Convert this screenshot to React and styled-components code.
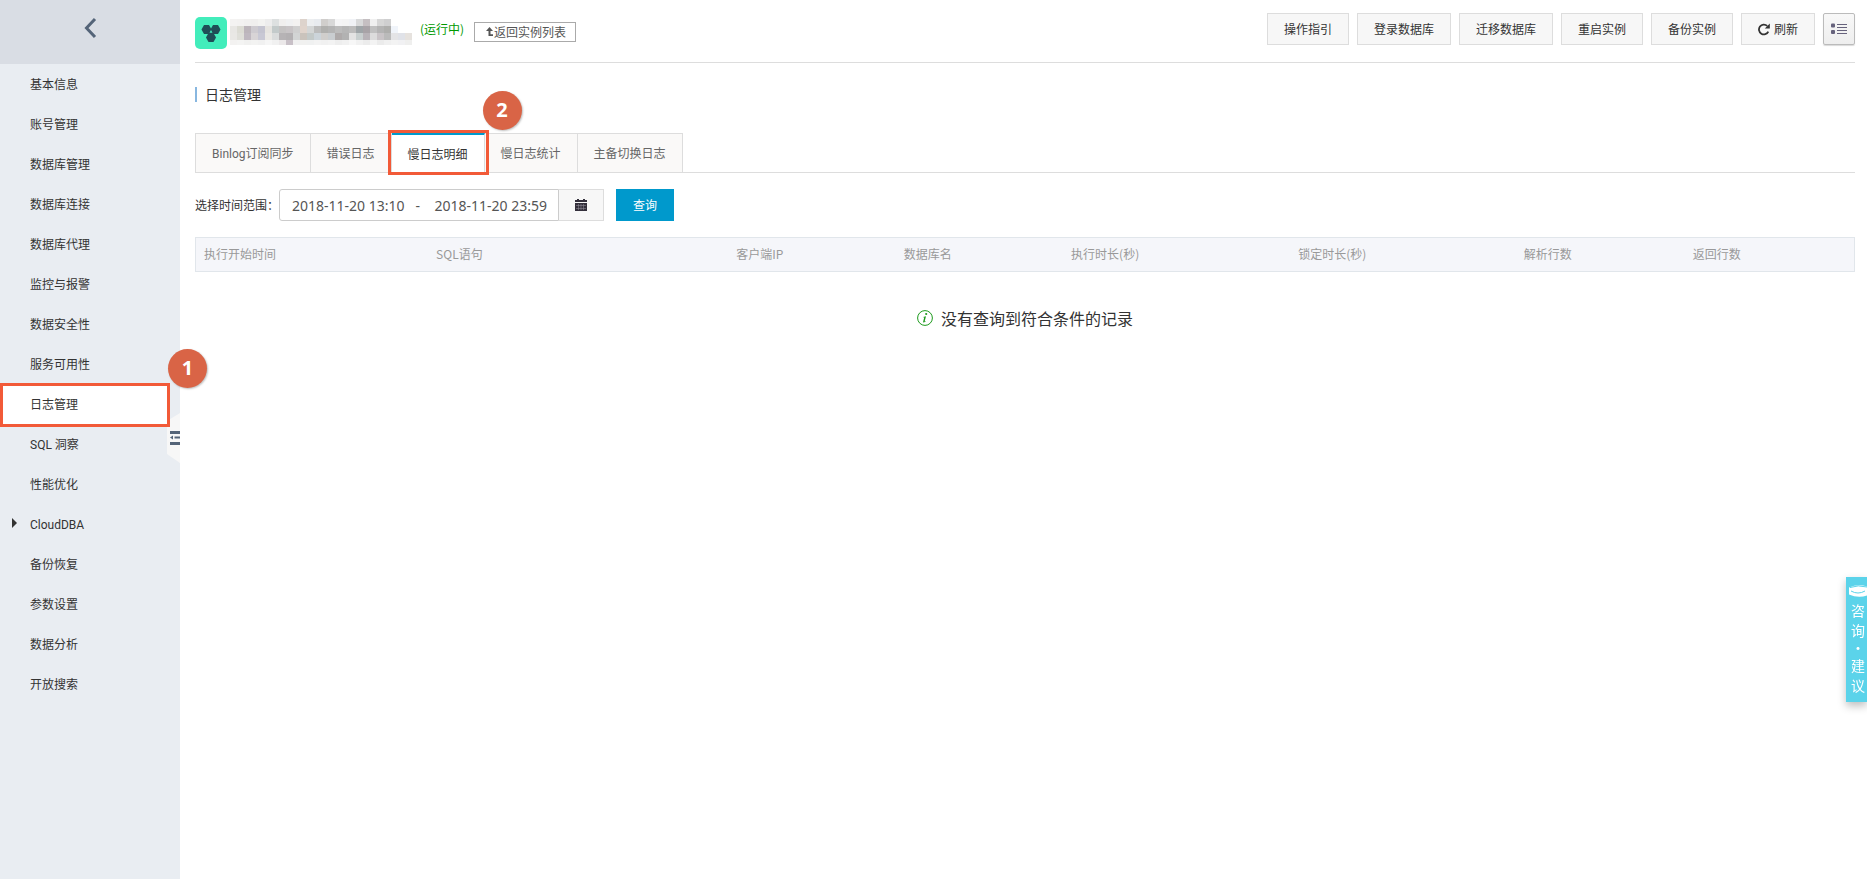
import React from 'react';
import styled, { createGlobalStyle } from 'styled-components';

const Color = {
	text: '#333',
	muted: '#999',
	line: '#ddd',
	side: '#e9edf2',
	sideTop: '#d9dde4',
	primary: '#0099cc',
	mark: '#f25a38',
	badge: '#d96446',
	help: '#5bd3ea',
};

const GlobalStyle = createGlobalStyle`
	* {
		box-sizing: border-box;
	}
	body {
		margin: 0;
		background: #fff;
		color: ${Color.text};
		font: 12px/20px "Noto Sans CJK SC", sans-serif;
	}
	button, input {
		font: inherit;
		color: inherit;
		margin: 0;
	}
	svg {
		display: block;
		flex: none;
	}
`;

const Layout = styled.div`
	display: flex;
	min-height: 100vh;
`;

const Sidebar = styled.aside`
	position: relative;
	flex: 0 0 180px;
	background: ${Color.side};
`;

const BackButton = styled.button`
	display: flex;
	align-items: center;
	justify-content: center;
	width: 100%;
	height: 64px;
	padding: 0 0 8px;
	border: 0;
	background: ${Color.sideTop};
`;

const Menu = styled.ul`
	list-style: none;
	margin: 0;
	padding: 0;
`;

const MenuItem = styled.li`
	position: relative;
	margin-right: 10px;
`;

const MenuLink = styled.a`
	display: flex;
	align-items: center;
	height: 40px;
	padding: 2px 0 0 30px;
	color: ${Color.text};
	font-family: Roboto, "Noto Sans CJK SC", sans-serif;
	text-decoration: none;
	background: ${props => props.$active ? '#fff' : 'transparent'};
`;

const Caret = styled.span`
	position: absolute;
	left: 12px;
	top: 14px;
	border: 5px solid transparent;
	border-left-color: ${Color.text};
	border-right: 0;
`;

const Frame = styled.span`
	position: absolute;
	inset: ${props => props.$inset};
	border: 3px solid ${Color.mark};
	pointer-events: none;
	z-index: 2;
`;

const Badge = styled.span`
	position: absolute;
	top: ${props => props.$top};
	right: -37px;
	width: 39px;
	height: 39px;
	border-radius: 50%;
	background: ${Color.badge};
	box-shadow: 1px 1px 2px rgba(0, 0, 0, .25);
	color: #fff;
	font: bold 20px/38px "Noto Sans", sans-serif;
	text-align: center;
	z-index: 3;
`;

const Handle = styled.button`
	position: absolute;
	right: 0;
	top: 413px;
	width: 13px;
	height: 50px;
	padding: 0;
	border: 0;
	background: none;
`;

const Main = styled.main`
	flex: 1 1 auto;
	min-width: 0;
	padding: 0 12px 0 15px;
`;

const Header = styled.header`
	display: flex;
	justify-content: space-between;
	height: 63px;
	border-bottom: 1px solid ${Color.line};
`;

const Instance = styled.div`
	display: flex;
	align-items: flex-start;
	padding-top: 17px;
`;

const MaskedName = styled.svg`
	margin: 2px 8px 0 3px;
`;

const Status = styled.span`
	width: 46px;
	margin: 2px 8px 0 0;
	color: #090;
	white-space: nowrap;
`;

const ListButton = styled.button`
	display: flex;
	align-items: center;
	height: 20px;
	margin-top: 5px;
	padding: 0 9px 0 11px;
	border: 1px solid #aaa;
	background: #fff;
	color: #555;
	line-height: 18px;
`;

const Toolbar = styled.div`
	display: flex;
	gap: 8px;
	padding-top: 13px;
`;

const ToolButton = styled.button`
	display: flex;
	align-items: center;
	gap: 4px;
	height: 32px;
	padding: 0 16px;
	border: 1px solid ${Color.line};
	background: #f7f7f7;
	white-space: nowrap;
`;

const ViewButton = styled(ToolButton)`
	width: 32px;
	justify-content: center;
	padding: 0;
	border-color: #bbb;
	border-radius: 2px;
	background: linear-gradient(#f8f8f8, #eee);
	box-shadow: 0 1px 1px rgba(0, 0, 0, .15);
`;

const Title = styled.h1`
	display: flex;
	align-items: center;
	gap: 8px;
	margin: 20px 0 0;
	font-size: 14px;
	line-height: 22px;
	font-weight: 400;

	&::before {
		content: '';
		width: 2px;
		height: 15px;
		background: #88b7e0;
	}
`;

const Tabs = styled.div`
	display: flex;
	margin-top: 28px;
	border-bottom: 1px solid ${Color.line};
`;

const TabCell = styled.div`
	position: relative;
`;

const Tab = styled.button`
	display: block;
	height: 39px;
	padding: 2px 16px 0;
	border: 1px solid ${Color.line};
	border-width: 1px 1px 0 0;
	background: #faf9f8;
	color: #666;
	font-family: Roboto, "Noto Sans CJK SC", sans-serif;

	${TabCell}:first-child & {
		border-left-width: 1px;
	}

	&[aria-selected='true'] {
		height: 40px;
		margin-bottom: -1px;
		border-top: 2px solid ${Color.primary};
		background: #fff;
		color: ${Color.text};
	}
`;

const Filter = styled.form`
	display: flex;
	align-items: center;
	margin: 16px 0;
`;

const RangeLabel = styled.label`
	width: 84px;
	white-space: nowrap;
`;

const RangeInput = styled.input`
	width: 280px;
	height: 32px;
	padding: 0 0 0 12px;
	border: 1px solid #ccc;
	border-radius: 3px 0 0 3px;
	color: #555;
	font: 14px "Noto Sans", sans-serif;
	outline: 0;
`;

const CalendarButton = styled.button`
	display: flex;
	align-items: center;
	justify-content: center;
	width: 45px;
	height: 32px;
	padding: 0;
	border: 1px solid ${Color.line};
	border-left: 0;
	background: #f7f7f7;
`;

const SearchButton = styled.button`
	height: 32px;
	margin-left: 12px;
	padding: 0 17px;
	border: 0;
	background: ${Color.primary};
	color: #fff;
`;

const Table = styled.table`
	width: 100%;
	table-layout: fixed;
	border-spacing: 0;
	border: 1px solid #e1e6eb;
	background: #f5f6fa;
`;

const Th = styled.th`
	width: ${props => props.$width};
	height: 33px;
	padding: 0 8px 2px;
	color: ${Color.muted};
	font-weight: 400;
	text-align: left;
	white-space: nowrap;
`;

const Empty = styled.p`
	display: flex;
	align-items: center;
	justify-content: center;
	gap: 8px;
	margin: 33px 0 0;
	font-size: 16px;
	line-height: 26px;
`;

const Help = styled.button`
	position: fixed;
	right: 0;
	top: 577px;
	display: flex;
	flex-direction: column;
	align-items: center;
	width: 21px;
	height: 125px;
	padding: 0 0 4px 3px;
	border: 0;
	background: ${Color.help};
	box-shadow: 0 4px 8px rgba(0, 0, 0, .25);
	color: #fff;
	font-size: 14px;
	line-height: 20px;

	svg {
		margin: 8px 0 3px;
	}
`;

const HelpDot = styled.span`
	line-height: 15px;
`;

const menu = [
	'基本信息', '账号管理', '数据库管理', '数据库连接', '数据库代理', '监控与报警',
	'数据安全性', '服务可用性', '日志管理', 'SQL 洞察', '性能优化', 'CloudDBA',
	'备份恢复', '参数设置', '数据分析', '开放搜索',
];

const tools = ['操作指引', '登录数据库', '迁移数据库', '重启实例', '备份实例'];

const tabs = ['Binlog订阅同步', '错误日志', '慢日志明细', '慢日志统计', '主备切换日志'];

const columns = [
	['执行开始时间', '14%'],
	['SQL语句', '18.1%'],
	['客户端IP', '10.1%'],
	['数据库名', '10.1%'],
	['执行时长(秒)', '13.7%'],
	['锁定时长(秒)', '13.6%'],
	['解析行数', '10.2%'],
	['返回行数', '10.2%'],
];

// tiles that hide the instance name
const mask = [
	'f4f3f2 f3f2f1 f1f0ef f0efee f3f3f1 ededed dde0e0 f0efee f0f1f2 f3f2f1 ddd3cc eceef0 e8ebef d0cecc d8d8d8 f5f5f6 f4f4f4 f0f2f6 d8d9da c5bfc2 f0f0f0 d6d6d6 cfcfd0',
	'e8e7e4 dcdcd4 bcb5bb cecbd0 c4c4d0 e6e4e0 c3caca c4c2c2 c8c4c6 cfcfcf e0d4cc d4d6d6 bcbcbc b0b0ae b4b4b4 bcbcbc b6b6b6 bcbcbc 9fa5a8 a8a3a7 c0c0c0 b4b4b4 aeaeac f0f4fa',
	'e9e8e5 dfdfd9 bfb8c0 d8d4d6 c8c8d4 eae8e4 dadcdc b6b3b5 b3b0b2 d2d4d4 cac3bc c3c9c8 ccd4da d0cecc c9cdd0 aeaaaa b2b2b2 e3e3e3 c8cfcf b8b3b8 dcdcdc c9c4c7 bababa e4e4e6 e0e2e8 e6e2de',
	'f3f2f1 f4f4f3 f1f1f0 f3f3f2 f1f1f1 f6f6f6 f1f1f1 ebe8e9 c8c0c7 f0f0f0 f1f1f0 f0f1f1 f3f3f3 f1f1f1 f3f3f3 eeeeee f1f1f1 f7f7f7 f1f1f1 ececec f3f3f3 ebebeb f0f0f0 f3f3f3 f1f1f3 efefee',
].map(row => row.split(' '));

const Mask = () =>
	<MaskedName width='182' height='26' viewBox='0 0 182 26' shapeRendering='crispEdges' aria-hidden='true'>
		{mask.map((row, y) => row.map((fill, x) =>
			<rect key={`${x}-${y}`} x={x * 7} y={y * 7} width='7' height='7' fill={`#${fill}`} />
		))}
	</MaskedName>

const Logo = () =>
	<svg width='32' height='32' viewBox='0 0 32 32' aria-hidden='true'>
		<rect width='32' height='32' rx='5' fill='#42edbb' />
		<g fill='#1f4d57'>
			<path d='M9 8h5l2.500 4.500L14 17H9l-2.500-4.500z' />
			<path d='M18 8h5l2.500 4.500L23 17h-5l-2.500-4.500z' />
			<path d='M13.500 16h5l2.500 4.500-2.500 4.500h-5L11 20.500z' />
			<path d='M13 12h6v6h-6z' />
		</g>
		<path d='M16 13l1.500 2.800h-3z' fill='#42edbb' />
		<path d='M15 7.500h2L16 10z' fill='#42edbb' />
	</svg>

const ChevronIcon = () =>
	<svg width='14' height='22' viewBox='0 0 14 22' aria-hidden='true'>
		<path d='M12 2L3.500 11l8.500 9' fill='none' stroke='#546478' strokeWidth='3' />
	</svg>

const ReturnIcon = () =>
	<svg width='8' height='10' viewBox='0 0 8 10' aria-hidden='true'>
		<path d='M3.500 0L0 4h2.500v5H7V7.200H4.500V4H7z' fill='#555' />
	</svg>

const RefreshIcon = () =>
	<svg width='12' height='13' viewBox='0 0 12 13' aria-hidden='true'>
		<path d='M10.300 8.600A4.900 4.900 0 1 1 9.200 2.900' fill='none' stroke='#333' strokeWidth='1.800' />
		<path d='M11.800 0.400v5H6.800z' fill='#333' />
	</svg>

const ListIcon = () =>
	<svg width='16' height='12' viewBox='0 0 16 12' fill='#66627c' aria-hidden='true'>
		<rect x='0' y='0.500' width='4' height='4' rx='1' />
		<rect x='0' y='7' width='4' height='4' rx='1' />
		<path d='M6 1h10v1H6zM6 4h10v1H6zM6 7h10v1H6zM6 10h10v1H6z' />
	</svg>

const CalendarIcon = () =>
	<svg width='12' height='12' viewBox='0 0 12 12' aria-hidden='true'>
		<path d='M0 1h2V0h2v1h4V0h2v1h2v2H0zM0 4h12v8H0z' fill='#332f3b' />
		<path d='M1 6.500h10M1 9.500h10M3.500 5v6M6 5v6M8.500 5v6' stroke='#9a97a0' strokeWidth='0.500' />
	</svg>

const HandleIcon = () =>
	<svg width='13' height='50' viewBox='0 0 13 50' aria-hidden='true'>
		<path d='M13 0L0 8v33l13 9z' fill='#f7f7f7' />
		<path d='M3 18h10v3H3zM7.500 23.500H13v2H7.500zM3 29h10v3H3zM3 24.500l3-2v4z' fill='#546478' />
	</svg>

const InfoIcon = () =>
	<svg width='16' height='16' viewBox='0 0 16 16' aria-hidden='true'>
		<circle cx='8' cy='8' r='7.400' fill='none' stroke='#1c9a1c' />
		<circle cx='9.200' cy='4' r='1.100' fill='#1c9a1c' />
		<path d='M6.200 6.900l2.800-.6-1.300 5c-.1.500.3.400 1.100-.3l.2.300c-1.200 1.300-3.200 1.800-2.800.2l1-4-1-.2z' fill='#1c9a1c' />
	</svg>

const HelpIcon = () =>
	<svg width='18' height='12' viewBox='0 0 18 12' aria-hidden='true'>
		<path d='M0 2.500Q9-1.500 18 1.500v9Q9 13.500 0 9.500z' fill='#fff' />
		<path d='M1 2.500Q9-.5 18 2M2 6q7 4 14 0' fill='none' stroke={Color.help} />
	</svg>

const SideMenu = () =>
	<Sidebar>
		<BackButton aria-label='返回'><ChevronIcon /></BackButton>
		<nav>
			<Menu>
				{menu.map(name => {
					const active = name === '日志管理';
					return (
						<MenuItem key={name}>
							{name === 'CloudDBA' && <Caret />}
							<MenuLink href='#' $active={active}>{name}</MenuLink>
							{active && <Frame $inset='-1px 0 -3px 0' />}
							{active && <Badge $top='-35px'>1</Badge>}
						</MenuItem>
					);
				})}
			</Menu>
		</nav>
		<Handle aria-label='收起菜单'><HandleIcon /></Handle>
	</Sidebar>

const PageHeader = () =>
	<Header>
		<Instance>
			<Logo />
			<Mask />
			<Status>(运行中)</Status>
			<ListButton><ReturnIcon />返回实例列表</ListButton>
		</Instance>
		<Toolbar>
			{tools.map(name => <ToolButton key={name}>{name}</ToolButton>)}
			<ToolButton><RefreshIcon />刷新</ToolButton>
			<ViewButton aria-label='列表'><ListIcon /></ViewButton>
		</Toolbar>
	</Header>

const LogTabs = () =>
	<Tabs role='tablist'>
		{tabs.map((name, i) =>
			<TabCell key={name} role='presentation'>
				<Tab role='tab' aria-selected={i === 2}>{name}</Tab>
				{i === 2 && <Frame $inset='-3px -4px' />}
				{i === 2 && <Badge $top='-42px'>2</Badge>}
			</TabCell>
		)}
	</Tabs>

const App = () =>
	<Layout>
		<GlobalStyle />
		<SideMenu />
		<Main>
			<PageHeader />
			<Title>日志管理</Title>
			<LogTabs />
			<Filter onSubmit={e => e.preventDefault()}>
				<RangeLabel htmlFor='range'>选择时间范围：</RangeLabel>
				<RangeInput id='range' readOnly value='2018-11-20 13:10   -    2018-11-20 23:59' />
				<CalendarButton type='button' aria-label='选择日期'><CalendarIcon /></CalendarButton>
				<SearchButton>查询</SearchButton>
			</Filter>
			<Table>
				<thead>
					<tr>
						{columns.map(([name, width]) => <Th key={name} $width={width}>{name}</Th>)}
					</tr>
				</thead>
			</Table>
			<Empty><InfoIcon />没有查询到符合条件的记录</Empty>
		</Main>
		<Help>
			<HelpIcon />
			<span>咨</span>
			<span>询</span>
			<HelpDot>·</HelpDot>
			<span>建</span>
			<span>议</span>
		</Help>
	</Layout>


export default App
